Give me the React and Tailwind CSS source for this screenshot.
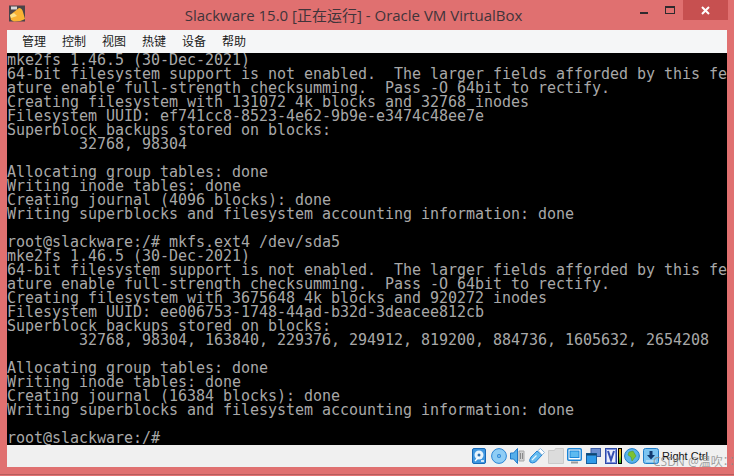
import React from 'react';

const lines = [
  'mke2fs 1.46.5 (30-Dec-2021)',
  '64-bit filesystem support is not enabled.  The larger fields afforded by this fe',
  'ature enable full-strength checksumming.  Pass -O 64bit to rectify.',
  'Creating filesystem with 131072 4k blocks and 32768 inodes',
  'Filesystem UUID: ef741cc8-8523-4e62-9b9e-e3474c48ee7e',
  'Superblock backups stored on blocks:',
  '        32768, 98304',
  '',
  'Allocating group tables: done',
  'Writing inode tables: done',
  'Creating journal (4096 blocks): done',
  'Writing superblocks and filesystem accounting information: done',
  '',
  'root@slackware:/# mkfs.ext4 /dev/sda5',
  'mke2fs 1.46.5 (30-Dec-2021)',
  '64-bit filesystem support is not enabled.  The larger fields afforded by this fe',
  'ature enable full-strength checksumming.  Pass -O 64bit to rectify.',
  'Creating filesystem with 3675648 4k blocks and 920272 inodes',
  'Filesystem UUID: ee006753-1748-44ad-b32d-3deacee812cb',
  'Superblock backups stored on blocks:',
  '        32768, 98304, 163840, 229376, 294912, 819200, 884736, 1605632, 2654208',
  '',
  'Allocating group tables: done',
  'Writing inode tables: done',
  'Creating journal (16384 blocks): done',
  'Writing superblocks and filesystem accounting information: done',
  '',
  'root@slackware:/#',
];

const menus = ['管理', '控制', '视图', '热键', '设备', '帮助'];

const AppIcon = () => (
  <svg width="17" height="17" viewBox="0 0 17 17" className="shrink-0">
    <rect width="16" height="16" y="0.5" fill="#4a4348" />
    <rect x="2" y="1.5" width="6" height="3" fill="#d8d8d8" />
    <path d="M1 10 L10 3 Q13 3 14 7 L16 14 Q12 16.5 5 16.5 L2 15 Z" fill="#f9b233" />
    <path d="M1 10 L5 8 L8 11 L2 13 Z" fill="#fbe08a" />
  </svg>
);

const Hdd = () => (
  <svg width="14" height="16" viewBox="0 0 14 16">
    <rect x="0.5" y="0.5" width="13" height="15" rx="1.5" fill="#3f97e0" stroke="#1769b8" />
    <circle cx="7" cy="7" r="4.5" fill="#e6f3fc" />
    <circle cx="7" cy="7" r="1.5" fill="#2a6fb0" />
    <path d="M3 13 L7 9 M9 13h3" stroke="#fff" strokeWidth="1.4" />
  </svg>
);

const Cd = () => (
  <svg width="16" height="16" viewBox="0 0 16 16">
    <circle cx="8" cy="8" r="7.4" fill="#8fcdf5" stroke="#2b86d6" />
    <circle cx="8" cy="8" r="2" fill="#2b86d6" />
    <circle cx="8" cy="8" r="0.8" fill="#d8eefb" />
  </svg>
);

const Audio = () => (
  <svg width="15" height="16" viewBox="0 0 15 16">
    <path d="M0.5 5h3l4-4.500v15l-4-4.500h-3z" fill="#55aeea" stroke="#1e78c8" />
    <path d="M9 3h5v10h-5z" fill="#d2d2d2" stroke="#a8a8a8" />
    <path d="M10.500 5v6M12.500 5v6" stroke="#8a8a8a" />
  </svg>
);

const Usb = () => (
  <svg width="16" height="16" viewBox="0 0 16 16">
    <path d="M1 14 Q0 12 2 9 L8 3 L13 7 L6.500 14 Q3 16 1 14z" fill="#66bcf0" stroke="#2382d4" />
    <path d="M9 2.500 L11.500 0.500 L15.500 4.500 L13 7z" fill="#fff" stroke="#8cb8dc" />
    <path d="M3 12 L7.500 7.500" stroke="#e8f5fd" strokeWidth="1.200" />
  </svg>
);

const Folder = () => (
  <svg width="16" height="16" viewBox="0 0 16 16">
    <path d="M0.500 15.500v-13h6l1-2h8v15z" fill="#dcdcdc" stroke="#cacaca" />
  </svg>
);

const Display = () => (
  <svg width="15" height="16" viewBox="0 0 15 16">
    <rect x="0.750" y="0.750" width="13.500" height="11.500" rx="1" fill="#fff" stroke="#1c86d8" strokeWidth="1.500" />
    <rect x="3" y="3" width="9" height="6.500" fill="#5dbaf0" stroke="#1c86d8" />
    <path d="M4 14.500h7" stroke="#9a9a9a" strokeWidth="2" />
  </svg>
);

const Windows = () => (
  <svg width="15" height="16" viewBox="0 0 15 16">
    <rect x="5" y="0.500" width="9.500" height="8" fill="#6b8fd0" stroke="#3c5ea8" />
    <rect x="0.500" y="5.500" width="10" height="10" fill="#2f9ae8" stroke="#155f9f" />
    <rect x="0.500" y="5.500" width="10" height="2" fill="#13466f" />
  </svg>
);

const VBadge = () => (
  <svg width="12" height="16" viewBox="0 0 12 16">
    <rect x="0.500" y="0.500" width="11" height="15" fill="#7c93de" stroke="#2d49a8" />
    <rect x="2" y="2" width="8" height="12" fill="#e8ecfa" />
    <path d="M3 3 L6 12 L9 3" fill="none" stroke="#3650b0" strokeWidth="2" />
  </svg>
);

const Meter = () => (
  <svg width="4" height="16" viewBox="0 0 4 16">
    <defs>
      <linearGradient id="meterFill" x1="0" y1="0" x2="0" y2="1">
        <stop offset="0" stopColor="#f0a020" />
        <stop offset="0.500" stopColor="#d8d020" />
        <stop offset="1" stopColor="#20b020" />
      </linearGradient>
    </defs>
    <rect width="4" height="16" fill="#000" />
    <rect x="1" y="1" width="2" height="14" fill="url(#meterFill)" />
  </svg>
);

const Globe = () => (
  <svg width="16" height="16" viewBox="0 0 16 16">
    <circle cx="8" cy="8" r="7.400" fill="#58b2ea" stroke="#1f7cc8" />
    <path d="M5 4 L9 3 L12 8 L8 13 L7 9 L4 7z" fill="#7cc232" stroke="#4f9420" strokeWidth="0.500" />
  </svg>
);

const Download = () => (
  <svg width="16" height="16" viewBox="0 0 16 16">
    <rect x="0.500" y="0.500" width="15" height="15" rx="2" fill="#7cc4f2" stroke="#1f7cc8" />
    <path d="M6.500 3h3v4h2.500L8 11.500 4 7h2.500z" fill="#123a70" />
    <path d="M3 13h10" stroke="#d8eefb" />
  </svg>
);

export default function App() {
  return (
    <div
      className="relative flex h-[476px] w-[734px] flex-col overflow-hidden bg-[#e07070]"
      style={{ fontFamily: '"Open Sans", "Noto Sans CJK SC", sans-serif' }}
    >
      {/* Title bar */}
      <div className="flex h-[30px] shrink-0 items-start">
        <div className="mt-[5px] ml-[9px]">
          <AppIcon />
        </div>
        <div className="mt-[6px] flex-1 pl-[51px] text-center text-[15px] leading-[18px] text-[#40343a]">
          Slackware 15.0 [正在运行] - Oracle VM VirtualBox
        </div>
        <div className="mr-[6px] flex items-start">
          <div className="flex h-5 w-[27px] items-center justify-center">
            <div className="mt-[5px] h-[2px] w-2 bg-[#2f2a2e]" />
          </div>
          <div className="flex h-5 w-[26px] items-center justify-center">
            <div className="h-2 w-[10px] border border-t-2 border-[#2f2a2e]" />
          </div>
          <div className="flex h-5 w-[45px] items-center justify-center bg-[#c75050]">
            <svg width="9" height="9" viewBox="0 0 9 9">
              <path d="M1 1 L8 8 M8 1 L1 8" stroke="#fff" strokeWidth="2" />
            </svg>
          </div>
        </div>
      </div>

      <div className="mx-[7px] flex flex-1 flex-col">
        {/* Menu bar */}
        <div className="flex h-[23px] shrink-0 items-center bg-[#f5f6f7] pl-[7px] text-[12px] text-[#1a1a1a]">
          {menus.map((m) => (
            <span key={m} className="px-2 leading-[23px]">
              {m}
            </span>
          ))}
        </div>

        {/* Guest console */}
        <div
          className="h-[392px] shrink-0 overflow-hidden bg-black text-[15px] leading-[14px] tracking-[-0.03px] whitespace-pre text-[#a8a8a8]"
          style={{ fontFamily: '"DejaVu Sans Mono", monospace' }}
        >
          {lines.map((l, i) => (
            <div key={i} className="h-[14px]">
              {l}
            </div>
          ))}
        </div>

        {/* Status bar */}
        <div className="flex h-[22px] shrink-0 items-center bg-[#f0f0f0] pl-[465px]">
          <Hdd />
          <div className="ml-[5px]"><Cd /></div>
          <div className="ml-[3px]"><Audio /></div>
          <div className="ml-[4px]"><Usb /></div>
          <div className="ml-[3px]"><Folder /></div>
          <div className="ml-[3px]"><Display /></div>
          <div className="ml-[4px]"><Windows /></div>
          <div className="ml-[4px]"><VBadge /></div>
          <div className="ml-[1px]"><Meter /></div>
          <div className="ml-[2px]"><Globe /></div>
          <div className="ml-[3px]"><Download /></div>
          <span
            className="ml-[3px] text-[11px] text-[#111]"
            style={{ fontFamily: '"Liberation Sans", sans-serif' }}
          >
            Right Ctrl
          </span>
        </div>
      </div>

      {/* Bottom frame edge */}
      <div className="mb-[1px] h-[7px] shrink-0 border-b border-[#b85c5c]" />

      {/* Image host watermark */}
      <div className="absolute top-[455px] left-[653px] text-[12px] leading-[14px] whitespace-nowrap text-[#8a8a8a]/80">
        CSDN @温吹∷
      </div>
    </div>
  );
}
